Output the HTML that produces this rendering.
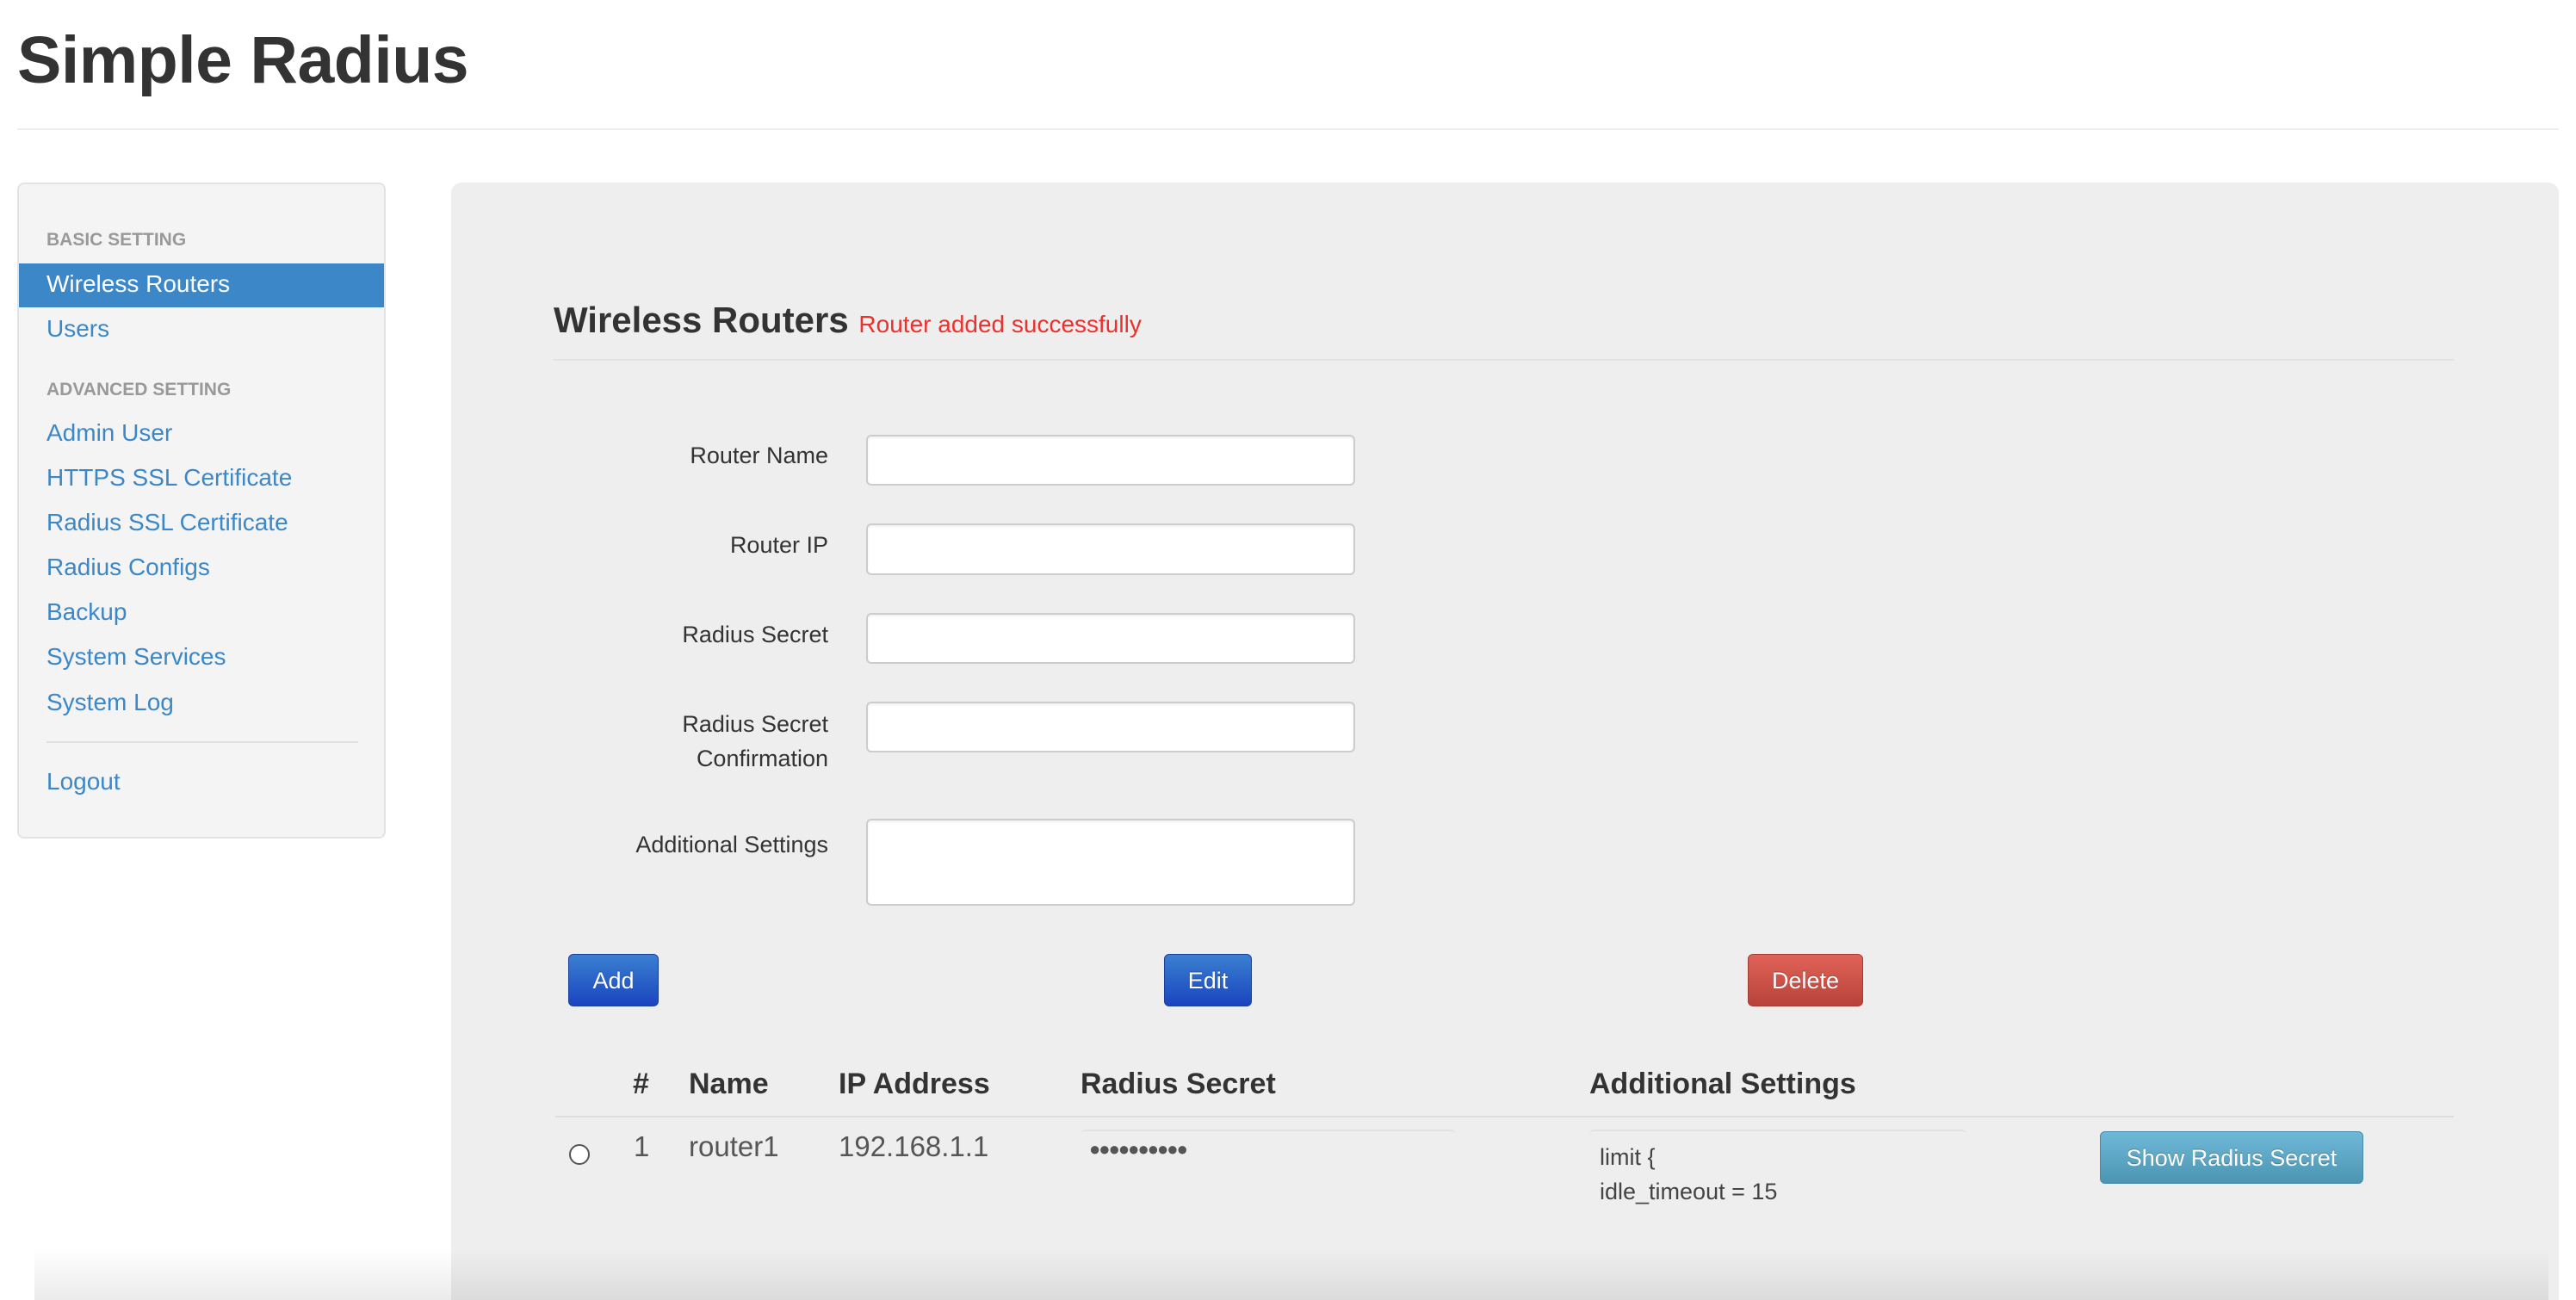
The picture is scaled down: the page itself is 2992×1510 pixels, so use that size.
<!DOCTYPE html>
<html><head><meta charset="utf-8"><style>
*{box-sizing:border-box;margin:0;padding:0}
html,body{width:2992px;height:1510px;overflow:hidden}
body{background:#fff;font-family:"Liberation Sans",Arial,sans-serif;color:#333;position:relative}
.a{position:absolute;white-space:nowrap}
h1{position:absolute;left:20px;top:26px;font-size:77px;font-weight:bold;color:#333;letter-spacing:-0.5px}
.hr{position:absolute;left:20px;width:2952px;top:149px;height:2px;background:#eee}
.side{position:absolute;left:20px;top:212px;width:428px;height:762px;background:#f4f4f4;border:2px solid #e3e3e3;border-radius:8px}
.nh{position:absolute;left:32px;font-size:21px;font-weight:bold;color:#999}
.nl{position:absolute;left:32px;font-size:28px;color:#3b87c8}
.act{position:absolute;left:0;top:92px;width:424px;height:51px;background:#3b87c8}
.main{position:absolute;left:524px;top:212px;width:2448px;height:1298px;background:#eee;border-radius:12px 12px 0 0}
.lab{position:absolute;right:2030px;font-size:27px;color:#333;text-align:right;line-height:40px}
.inp{position:absolute;left:1006px;width:568px;background:#fff;border:2px solid #ccc;border-radius:6px;box-shadow:inset 0 2px 2px rgba(0,0,0,.06)}
.btn{position:absolute;top:1108px;height:61px;border-radius:6px;color:#fff;font-size:27px;text-align:center;line-height:60px;text-shadow:0 -1px 0 rgba(0,0,0,.25)}
.th{position:absolute;top:1240px;font-size:34px;font-weight:bold;color:#333}
.td{position:absolute;top:1313px;font-size:33px;color:#555}
</style></head><body>
<h1>Simple Radius</h1>
<div class="hr"></div>
<div class="side">
 <div class="nh" style="top:53px">BASIC SETTING</div>
 <div class="act"></div>
 <div class="nl" style="top:100px;color:#fff">Wireless Routers</div>
 <div class="nl" style="top:152px">Users</div>
 <div class="nh" style="top:227px">ADVANCED SETTING</div>
 <div class="nl" style="top:273px">Admin User</div>
 <div class="nl" style="top:325px">HTTPS SSL Certificate</div>
 <div class="nl" style="top:377px">Radius SSL Certificate</div>
 <div class="nl" style="top:429px">Radius Configs</div>
 <div class="nl" style="top:481px">Backup</div>
 <div class="nl" style="top:533px">System Services</div>
 <div class="nl" style="top:586px">System Log</div>
 <div style="position:absolute;left:32px;top:647px;width:362px;height:2px;background:#e0e0e0"></div>
 <div class="nl" style="top:678px">Logout</div>
</div>
<div class="main"></div>
<div class="a" style="left:643px;top:348px;font-size:42px;font-weight:bold;color:#333">Wireless Routers <span style="font-size:28px;font-weight:normal;color:#e9322d">Router added successfully</span></div>
<div class="a" style="left:643px;top:417px;width:2207px;height:2px;background:#e2e2e2"></div>

<div class="lab" style="top:509px">Router Name</div>
<div class="inp" style="top:505px;height:59px"></div>
<div class="lab" style="top:613px">Router IP</div>
<div class="inp" style="top:608px;height:60px"></div>
<div class="lab" style="top:717px">Radius Secret</div>
<div class="inp" style="top:712px;height:59px"></div>
<div class="lab" style="top:821px">Radius Secret<br>Confirmation</div>
<div class="inp" style="top:815px;height:59px"></div>
<div class="lab" style="top:961px">Additional Settings</div>
<div class="inp" style="top:951px;height:101px"></div>

<div class="btn" style="left:660px;width:105px;background:linear-gradient(#3a80d0,#1a44c0);border:1px solid #1a3f9a">Add</div>
<div class="btn" style="left:1352px;width:102px;background:linear-gradient(#3a80d0,#1a44c0);border:1px solid #1a3f9a">Edit</div>
<div class="btn" style="left:2030px;width:134px;background:linear-gradient(#e06358,#b9423a);border:1px solid #a33a33">Delete</div>

<div class="th" style="left:735px">#</div>
<div class="th" style="left:800px">Name</div>
<div class="th" style="left:974px">IP Address</div>
<div class="th" style="left:1255px">Radius Secret</div>
<div class="th" style="left:1846px">Additional Settings</div>
<div class="a" style="left:645px;top:1296px;width:2205px;height:2px;background:#ddd"></div>

<div class="a" style="left:661px;top:1329px;width:24px;height:24px;border:2px solid #555;border-radius:50%;background:#fff"></div>
<div class="td" style="left:736px">1</div>
<div class="td" style="left:800px">router1</div>
<div class="td" style="left:974px">192.168.1.1</div>
<div class="a" style="left:1255px;top:1312px;width:436px;height:52px;border-top:2px solid #e2e2e2;border-radius:6px;font-size:22px;color:#555;padding:8px 10px;letter-spacing:-2px">●●●●●●●●●●</div>
<div class="a" style="left:1846px;top:1312px;width:438px;height:94px;border-top:2px solid #e2e2e2;border-radius:6px;font-size:27px;color:#444;padding:10px 12px;line-height:40px">limit {<br>idle_timeout = 15</div>
<div class="btn" style="left:2439px;top:1314px;width:306px;background:linear-gradient(#70b8d8,#4b95b2);border:1px solid #468aa6">Show Radius Secret</div>
<div class="a" style="left:40px;top:1450px;width:2920px;height:60px;background:linear-gradient(rgba(0,0,0,0),rgba(0,0,0,.08))"></div>
</body></html>
